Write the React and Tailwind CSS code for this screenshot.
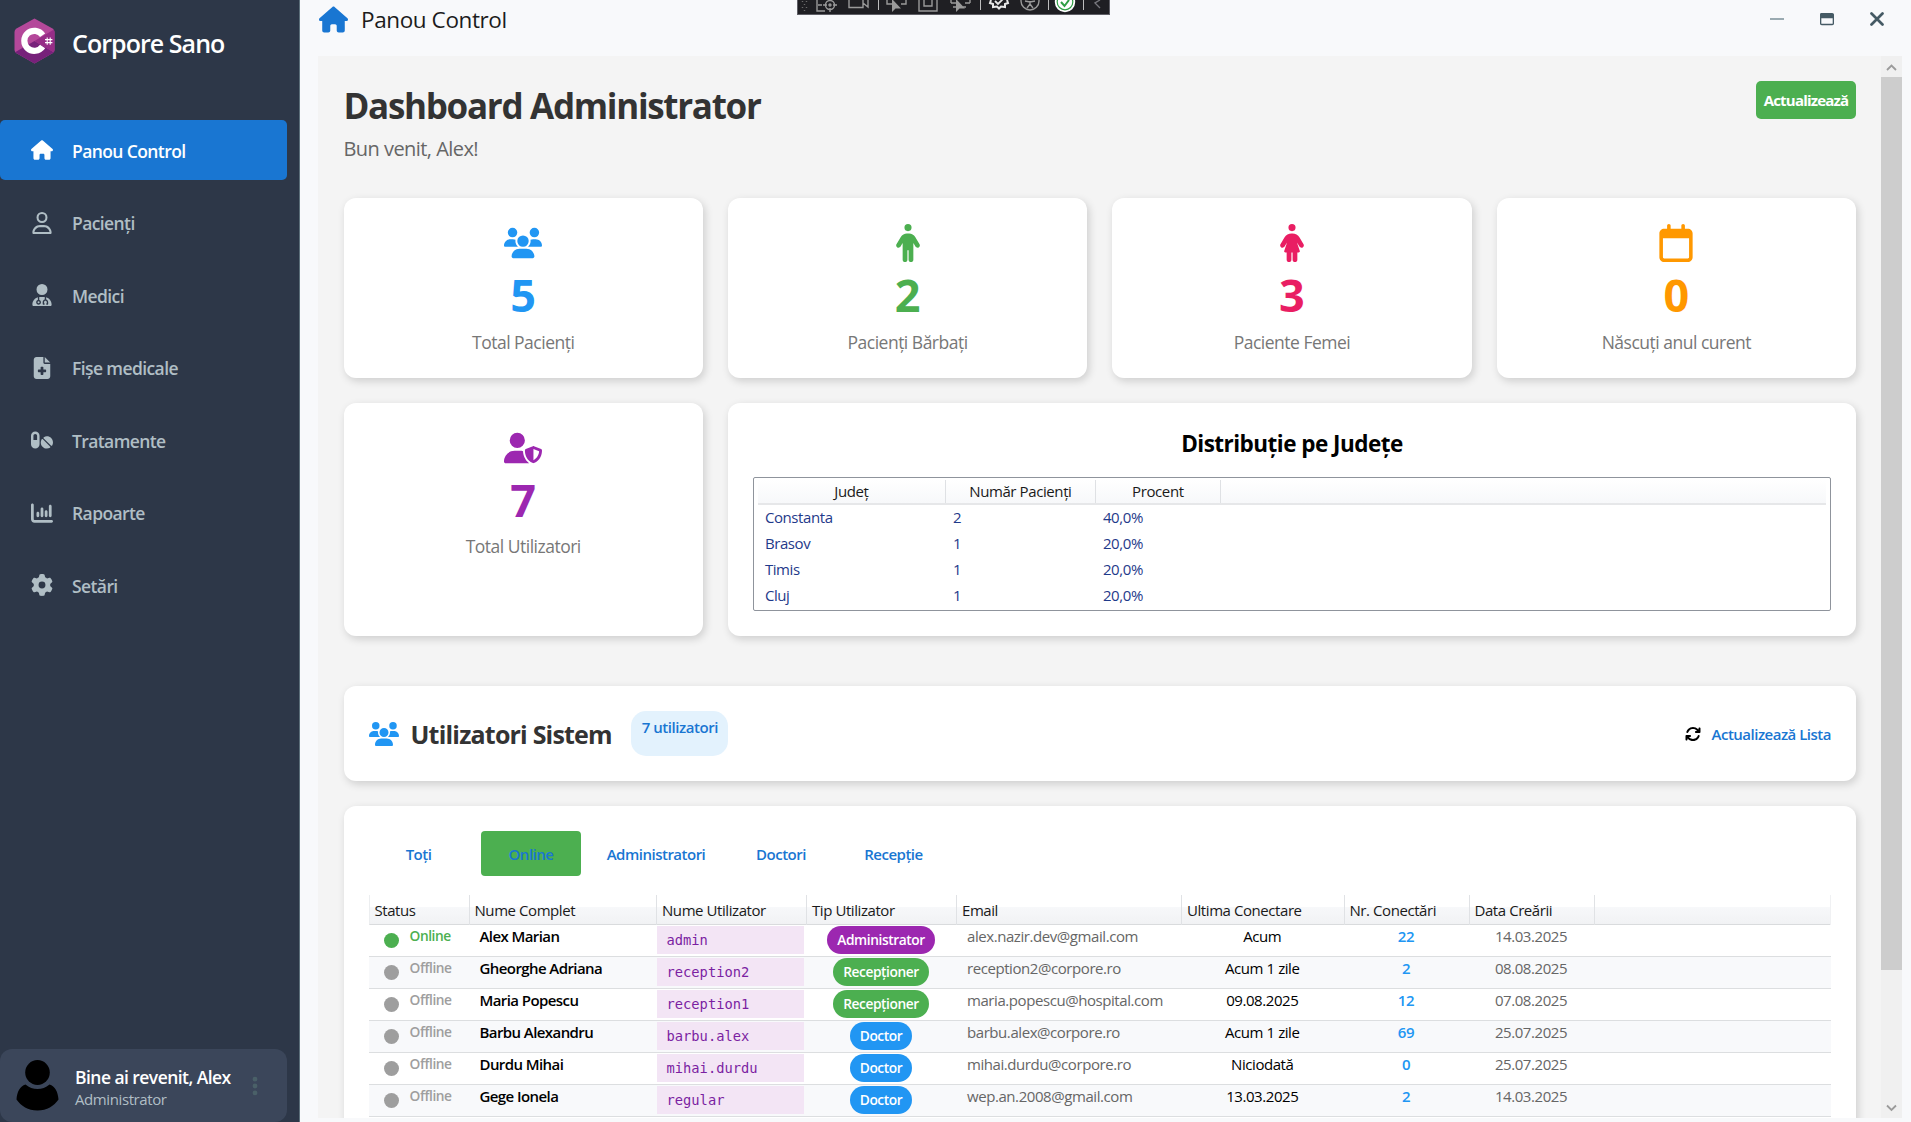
import React from "react";
import {
  FaHouse, FaRegUser, FaUserDoctor, FaFileMedical, FaPills, FaChartColumn, FaGear,
  FaUsers, FaPerson, FaPersonDress, FaRegCalendar, FaUserShield, FaArrowsRotate,
  FaRegWindowMaximize, FaEllipsisVertical,
} from "react-icons/fa6";

const CARD = "rounded-[12px] bg-white shadow-[2px_3px_8px_rgba(0,0,0,0.16)]";

function Logo() {
  return (
    <svg width="41" height="46" viewBox="0 0 41 46" className="shrink-0">
      <path d="M20.5 0.5 38.5 10.5Q40.5 11.7 40.5 14V32Q40.5 34 38.5 35.3L20.5 45.5 2.5 35.3Q.5 34 .5 32V14Q.5 11.7 2.5 10.5Z" fill="#b4489a" />
      <path d="M20.5 23 39.8 34.2Q39.5 34.8 38.5 35.3L20.5 45.5 2.5 35.3Q1.5 34.8 1 34.2Z" fill="#77217a" />
      <path d="M20.5 23 39.6 11.7Q40.5 12.6 40.5 14V32Q40.5 33.4 39.8 34.2Z" fill="#962d87" />
      <path d="M28.6 17.2A10 10 0 1 0 28.6 28.4" fill="none" stroke="#fff" strokeWidth="6.2" />
      <path d="M33.2 19.4v7.4M36.2 19.4v7.4M31 21.6h7.4M31 24.6h7.4" stroke="#fff" strokeWidth="1.1" />
    </svg>
  );
}

const NAV = [
  { label: "Panou Control", Icon: FaHouse, active: true },
  { label: "Pacienți", Icon: FaRegUser },
  { label: "Medici", Icon: FaUserDoctor },
  { label: "Fișe medicale", Icon: FaFileMedical },
  { label: "Tratamente", Icon: FaPills },
  { label: "Rapoarte", Icon: FaChartColumn },
  { label: "Setări", Icon: FaGear },
];

function Sidebar() {
  return (
    <aside className="flex w-[300px] shrink-0 flex-col border-r border-[#5c6f7a] bg-[#2d3748]">
      <div className="flex h-[120px] items-start pl-[14px] pt-[18px]">
        <Logo />
        <span className="ml-[17px] mt-[8px] text-[25px] leading-[34px] font-semibold tracking-[-0.95px] whitespace-nowrap text-white">Corpore Sano</span>
      </div>
      <nav className="flex flex-col gap-[12.5px]">
        {NAV.map(({ label, Icon, active }) => (
          <div
            key={label}
            className={`flex h-[60px] w-[287px] items-center rounded-[5px] pl-[31px] text-[17.5px] font-semibold tracking-[-0.6px] ${
              active ? "bg-[#1976d2] text-white" : "text-[#b0bec5]"
            }`}
          >
            <Icon size={22} />
            <span className="ml-[19px] pt-[2px]">{label}</span>
          </div>
        ))}
      </nav>
      <div className="mt-auto flex h-[73px] w-[287px] items-center rounded-[12px] bg-[#3b465a] pl-[16px]">
        <svg width="43" height="51" viewBox="0 0 43 51" className="shrink-0">
          <ellipse cx="21.5" cy="12.5" rx="12.3" ry="12.5" fill="#000" />
          <path d="M9.5 24.5Q15 29 21.5 29T33.500 24.500C39 26 42 32 42.500 39.500C38 46 31 50.500 21.500 50.500S5 46 .5 39.500C1 32 4 26 9.500 24.500Z" fill="#000" />
        </svg>
        <div className="ml-[16px] flex w-[160px] flex-col pt-[4px] whitespace-nowrap">
          <span className="text-[17.5px] leading-[23px] font-semibold tracking-[-0.55px] text-white">Bine ai revenit, Alex</span>
          <span className="text-[15px] leading-[20px] tracking-[-0.4px] text-[#b0bec5]">Administrator</span>
        </div>
        <FaEllipsisVertical size={22} className="ml-[9px] text-[#4a6068]" />
      </div>
    </aside>
  );
}

function DebugToolbar() {
  return (
    <div className="absolute left-[797px] top-0 h-[15px] w-[313px] border border-t-0 border-[#5f5f66] bg-[#1f1f23]">
      <svg width="311" height="14" viewBox="0 0 311 14" fill="none" stroke="#9a9a9a" strokeWidth="1.4">
        <path d="M4.500 1v1M8.500 1v1M6.500 4v1M4.500 7v1M8.500 7v1M6.500 10v1" stroke="#6b6b6b" />
        <path d="M19 0v11h8M20 5h4" />
        <circle cx="32" cy="5" r="4.500" /><circle cx="32" cy="5" r="1" />
        <path d="M32 8v4M25 5h4M35 5h4" />
        <path d="M51 0v7.500h14V0M65 3l5 4V0" />
        <path d="M80.500 0v10M182.500 0v10M250.500 0v10M285.500 0v10" stroke="#bdbdbd" strokeWidth="1" />
        <path d="M94 4H89V0M103 4h5V0" />
        <path d="M94 0v12l3.500-3.500H103L95 0Z" fill="#9a9a9a" stroke="none" />
        <path d="M121 0v11h18V0M126 0v6h8V0" />
        <path d="M153 3h5M172 3h-5M155 7h3M153 0v3M172 0v3M168 7h-3" />
        <path d="M158 0v12l3.500-3.500H167L159 0Z" fill="#9a9a9a" stroke="none" />
        <path d="M193 0l-1 3 3 1 0 3 4-0.500 2 2 2-2 4 .5 0-3 3-1-1-3" stroke="#e8e8e8" strokeWidth="2" />
        <path d="M197 1l3 3 5-5" stroke="#e8e8e8" strokeWidth="1.800" />
        <circle cx="232" cy="1" r="9" />
        <path d="M227 1l5 1 5-1M232 1v3l-3 4M232 4l3 4" />
        <circle cx="267" cy="2" r="9.500" fill="#fff" stroke="#fff" />
        <circle cx="267" cy="2" r="7.800" stroke="#2f9e44" strokeWidth="1.200" />
        <path d="M263 2l3.500 4L271 0" stroke="#2f9e44" strokeWidth="2" />
        <path d="M302 0l-5 3 5 5" stroke="#77777d" />
      </svg>
    </div>
  );
}

function TopBar() {
  return (
    <header className="flex h-[56px] items-start pl-[19px] pr-[27px]">
      <FaHouse size={29} className="mt-[5px] text-[#1976d2]" />
      <h2 className="ml-[13px] mt-[5px] text-[22.5px] leading-[30px] font-medium tracking-[-0.4px] text-[#1c1c1c]">Panou Control</h2>
      <div className="ml-auto mt-[12px] flex h-[14px] items-center gap-[36px]">
        <span className="mb-px h-[2px] w-[14px] bg-[#9aaab1]" />
        <FaRegWindowMaximize size={14} className="text-[#455a64]" />
        <svg width="14" height="14" viewBox="0 0 14 14" stroke="#455a64" strokeWidth="2.700" strokeLinecap="round"><path d="M1.500 1.500 12.500 12.500M12.500 1.500 1.500 12.500" /></svg>
      </div>
    </header>
  );
}

const STATS = [
  { label: "Total Pacienți", value: "5", Icon: FaUsers, color: "text-[#2196f3]" },
  { label: "Pacienți Bărbați", value: "2", Icon: FaPerson, color: "text-[#4caf50]" },
  { label: "Paciente Femei", value: "3", Icon: FaPersonDress, color: "text-[#e91e63]" },
  { label: "Născuți anul curent", value: "0", Icon: FaRegCalendar, color: "text-[#ff9800]" },
  { label: "Total Utilizatori", value: "7", Icon: FaUserShield, color: "text-[#9c27b0]" },
];

function StatCard({ label, value, Icon, color }) {
  return (
    <div className={`${CARD} flex flex-col items-center pt-[26px]`}>
      <Icon size={38} className={color} />
      <span className={`mt-[3px] text-[45px] leading-[60px] font-bold ${color}`}>{value}</span>
      <span className="mt-[4.5px] text-[17.5px] leading-[24px] tracking-[-0.5px] text-[#777]">{label}</span>
    </div>
  );
}

const COUNTIES = [
  ["Constanta", "2", "40,0%"],
  ["Brasov", "1", "20,0%"],
  ["Timis", "1", "20,0%"],
  ["Cluj", "1", "20,0%"],
];

function CountyCard() {
  return (
    <div className={`${CARD} col-span-3 flex flex-col px-[25px] pt-[26px]`}>
      <h3 className="text-center text-[22.5px] leading-[30px] font-bold tracking-[-0.53px] text-black">Distribuție pe Județe</h3>
      <div className="mt-[18px] h-[134px] rounded-[2px] border border-[#8f949c] px-[4px] pt-[2px] text-[15px] tracking-[-0.4px]">
        <div className="grid h-[25px] grid-cols-[188px_150px_125px_1fr] border-b-2 border-[#e6e7e9] bg-gradient-to-b from-white to-[#f7f8fa] text-center leading-[23px] text-[#1a1a1a]">
          <span className="border-r border-[#dfe1e4]">Județ</span>
          <span className="border-r border-[#dfe1e4]">Număr Pacienți</span>
          <span className="border-r border-[#dfe1e4]">Procent</span>
        </div>
        {COUNTIES.map((r) => (
          <div key={r[0]} className="grid h-[26px] grid-cols-[188px_150px_125px_1fr] pl-[7px] leading-[24px] text-[#1f3a8a]">
            <span>{r[0]}</span>
            <span>{r[1]}</span>
            <span>{r[2]}</span>
          </div>
        ))}
      </div>
    </div>
  );
}

const TABS = [
  ["Toți", "w-[100px]"],
  ["Online", "w-[100px] bg-[#4caf50]"],
  ["Administratori", "w-[125px]"],
  ["Doctori", "w-[100px]"],
  ["Recepție", "w-[100px]"],
];

const COLS = "grid grid-cols-[100px_187.5px_150px_150px_225px_162.5px_125px_125px_1fr]";
const HEADS = ["Status", "Nume Complet", "Nume Utilizator", "Tip Utilizator", "Email", "Ultima Conectare", "Nr. Conectări", "Data Creării"];
const ROLE = { Administrator: "bg-[#9c27b0]", "Recepționer": "bg-[#4caf50]", Doctor: "bg-[#2196f3]" };
const USERS = [
  ["Online", "Alex Marian", "admin", "Administrator", "alex.nazir.dev@gmail.com", "Acum", "22", "14.03.2025"],
  ["Offline", "Gheorghe Adriana", "reception2", "Recepționer", "reception2@corpore.ro", "Acum 1 zile", "2", "08.08.2025"],
  ["Offline", "Maria Popescu", "reception1", "Recepționer", "maria.popescu@hospital.com", "09.08.2025", "12", "07.08.2025"],
  ["Offline", "Barbu Alexandru", "barbu.alex", "Doctor", "barbu.alex@corpore.ro", "Acum 1 zile", "69", "25.07.2025"],
  ["Offline", "Durdu Mihai", "mihai.durdu", "Doctor", "mihai.durdu@corpore.ro", "Niciodată", "0", "25.07.2025"],
  ["Offline", "Gege Ionela", "regular", "Doctor", "wep.an.2008@gmail.com", "13.03.2025", "2", "14.03.2025"],
];

function UserTable() {
  return (
    <div className="mt-[19px] text-[15px] tracking-[-0.43px]">
      <div className={`${COLS} h-[30px] border-b border-l border-b-[#d9dbdd] border-l-[#eceef0] bg-[linear-gradient(#fff_0%,#fff_40%,#f7f8fa_41%,#f1f2f4_100%)] text-[#1a1a1a]`}>
        {HEADS.map((h) => (
          <span key={h} className="border-r border-[#e0e2e5] pl-[5px] pt-px leading-[29px] whitespace-nowrap">{h}</span>
        ))}
        <span className="border-r border-[#f0f1f3]" />
      </div>
      {USERS.map(([status, name, login, role, email, last, count, created], i) => (
        <div key={login} className={`${COLS} h-[32px] border-b border-[#dcdee0] pt-px leading-[20px] whitespace-nowrap ${i % 2 ? "bg-[#f8f9fb]" : "bg-white"}`}>
          <div className={`flex pl-[15.5px] text-[13.75px] leading-[20px] font-semibold ${status === "Online" ? "text-[#4caf50]" : "text-[#9e9e9e]"}`}>
            <span className="mt-[7px] mr-[10.5px] size-[15px] rounded-full bg-current" />
            {status}
          </div>
          <span className="pl-[11px] font-semibold tracking-[-0.58px] text-black">{name}</span>
          <span className="ml-[0.5px] mr-[2px] h-[28px] bg-[#f3e5f5] pl-[10px] font-['DejaVu_Sans_Mono',monospace] text-[13.75px] leading-[28px] tracking-normal text-[#7b1fa2]">{login}</span>
          <div className="flex justify-center">
            <span className={`h-[28px] rounded-[14px] px-[10px] text-[13.75px] leading-[28px] font-semibold text-white ${ROLE[role]}`}>{role}</span>
          </div>
          <span className="pl-[11px] text-[#666]">{email}</span>
          <span className="text-center text-black">{last}</span>
          <span className="text-center font-semibold text-[#2196f3]">{count}</span>
          <span className="text-center text-[#666]">{created}</span>
        </div>
      ))}
    </div>
  );
}

function Scrollbar() {
  return (
    <div className="flex w-[21px] shrink-0 flex-col bg-[#f0f0f0]">
      <svg width="21" height="21" viewBox="0 0 21 21" fill="none" stroke="#9b9b9b" strokeWidth="1.800"><path d="M6 14l4.500-4.500L15 14" /></svg>
      <div className="h-[893px] bg-[#cdcdcd]" />
      <svg width="21" height="21" viewBox="0 0 21 21" fill="none" stroke="#9b9b9b" strokeWidth="1.800" className="mt-auto"><path d="M6 8.500l4.500 4.500L15 8.500" /></svg>
    </div>
  );
}

export default function App() {
  return (
    <div className="relative flex h-[1122px] w-[1911px] overflow-hidden bg-[#f8f9fb] font-['Open_Sans','Noto_Sans',sans-serif]">
      <Sidebar />
      <div className="flex min-w-0 flex-1 flex-col">
        <TopBar />
        <main className="ml-[18px] mr-[9px] flex h-[1062px] overflow-hidden bg-[#f4f4f4]">
          <div className="flex flex-1 flex-col pl-[25.5px] pr-[25px] pt-[25px]">
            <div className="flex items-start justify-between">
              <div>
                <h1 className="mt-px text-[35px] leading-[48px] font-bold tracking-[-1.3px] text-[#333]">Dashboard Administrator</h1>
                <p className="mt-[5px] text-[20px] leading-[28px] tracking-[-0.55px] text-[#666]">Bun venit, Alex!</p>
              </div>
              <button className="h-[38px] w-[100px] rounded-[5px] bg-[#4caf50] text-[15px] font-bold tracking-[-0.8px] text-white">Actualizează</button>
            </div>
            <div className="mt-[35px] grid shrink-0 grid-cols-4 grid-rows-[179.5px_233px] gap-[25px]">
              {STATS.map((s) => <StatCard key={s.label} {...s} />)}
              <CountyCard />
            </div>
            <section className={`${CARD} mt-[50.5px] flex h-[95px] shrink-0 items-center px-[25px]`}>
              <FaUsers size={30} className="text-[#2196f3]" />
              <h3 className="ml-[12px] text-[25px] leading-[34px] font-bold tracking-[-0.8px] text-[#333]">Utilizatori Sistem</h3>
              <span className="ml-[19.5px] h-[45px] w-[97px] rounded-[15px] bg-[#e3f2fd] pt-[6px] text-center text-[15px] leading-[20px] font-semibold tracking-[-0.45px] text-[#1976d2]">7 utilizatori</span>
              <div className="ml-auto flex items-center gap-[11px] text-[15px] font-semibold tracking-[-0.5px] text-[#1976d2]">
                <FaArrowsRotate size={16} className="text-black" />
                <span className="pt-px">Actualizează Lista</span>
              </div>
            </section>
            <section className={`${CARD} mt-[25px] h-[400px] shrink-0 px-[25px] pt-[25px]`}>
              <div className="flex gap-[12.5px] text-[15px] font-semibold tracking-[-0.5px] text-[#1976d2]">
                {TABS.map(([t, cls]) => (
                  <button key={t} className={`h-[45px] rounded-[4px] pt-px ${cls}`}>{t}</button>
                ))}
              </div>
              <UserTable />
            </section>
          </div>
          <Scrollbar />
        </main>
      </div>
      <DebugToolbar />
    </div>
  );
}
